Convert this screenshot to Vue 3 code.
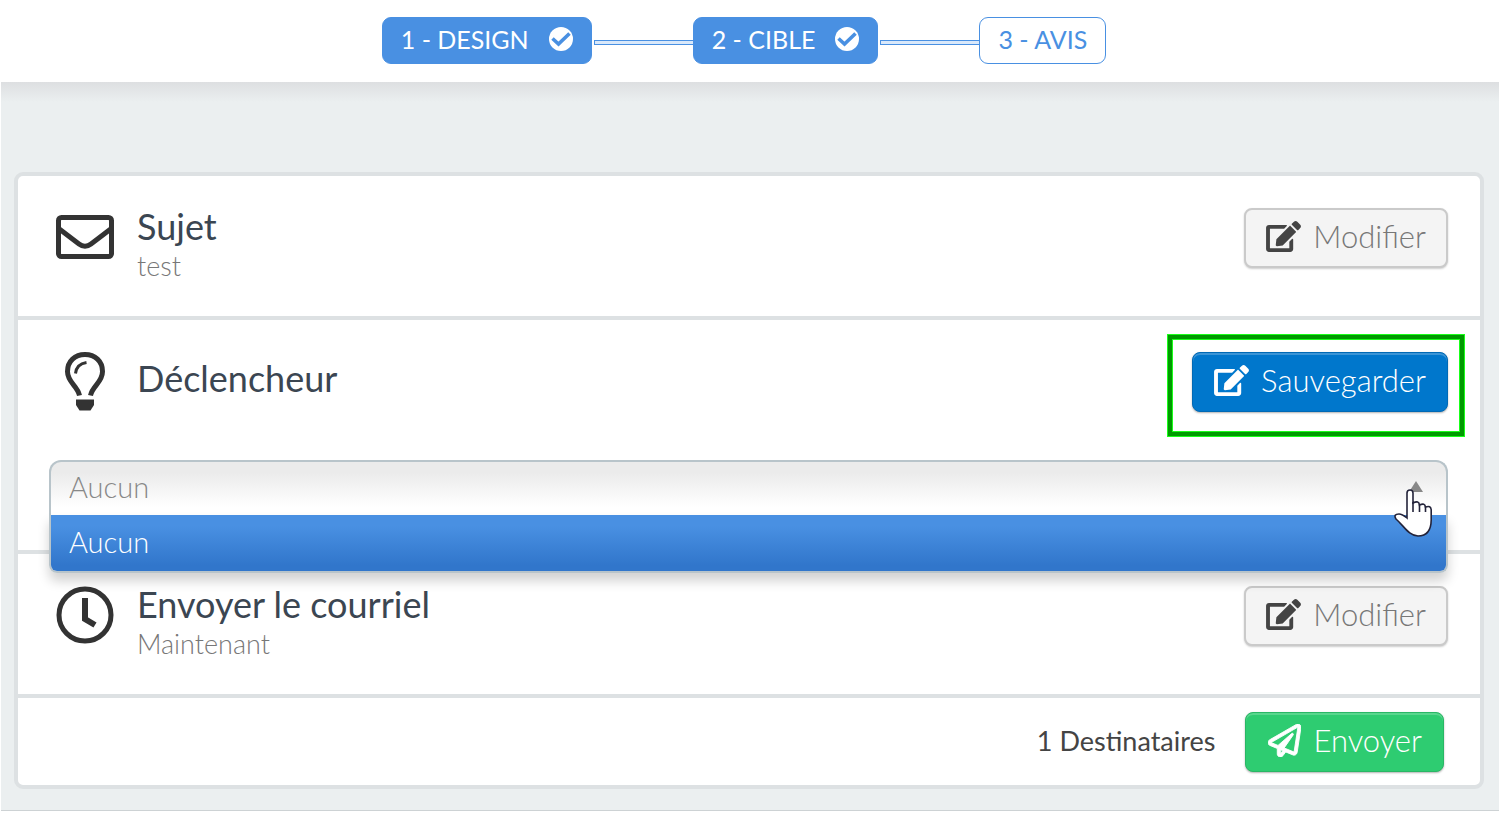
<script setup>
import { ref } from 'vue'

const steps = [
  { label: '1 - DESIGN', done: true },
  { label: '2 - CIBLE', done: true },
  { label: '3 - AVIS', done: false },
]
const trigger = ref('Aucun')
const options = ['Aucun']

const editPath = 'M402.6 83.2l90.2 90.2c3.8 3.8 3.8 10 0 13.8L274.4 405.6l-92.8 10.3c-12.4 1.4-22.9-9.1-21.5-21.5l10.3-92.8L388.8 83.2c3.8-3.8 10-3.8 13.8 0zm162-22.9l-48.8-48.8c-15.2-15.2-39.9-15.2-55.2 0l-35.4 35.4c-3.8 3.8-3.8 10 0 13.8l90.2 90.2c3.8 3.8 10 3.8 13.8 0l35.4-35.4c15.2-15.3 15.2-40 0-55.2zM384 346.2V448H64V128h229.8c3.2 0 6.2-1.3 8.5-3.5l40-40c7.6-7.6 2.2-20.5-8.5-20.5H48C21.5 64 0 85.5 0 112v352c0 26.5 21.5 48 48 48h352c26.5 0 48-21.5 48-48V306.2c0-10.7-12.9-16-20.5-8.5l-40 40c-2.2 2.3-3.5 5.3-3.5 8.5z'
</script>

<template>
  <div class="page">
    <header class="steps">
      <template v-for="(step, i) in steps" :key="step.label">
        <span v-if="i" class="link"></span>
        <button type="button" class="step" :class="{ done: step.done }">
          {{ step.label }}
          <svg v-if="step.done" class="check" viewBox="0 0 24 24" aria-hidden="true">
            <circle cx="12" cy="12" r="12" fill="#fff" />
            <path d="M3.500 11.500L9.500 17L20.500 6.500" fill="none" stroke="#4990e2" stroke-width="3.600" />
          </svg>
        </button>
      </template>
    </header>

    <main class="body">
      <div class="card">
        <section class="row">
          <svg class="icon" viewBox="0 0 60 60" aria-hidden="true">
            <g fill="none" stroke="#333" stroke-width="5">
              <rect x="3.5" y="9.5" width="53" height="39" rx="3" />
              <path d="M3 20L24 36Q30 40.500 36 36L57 20" />
            </g>
          </svg>
          <div class="text">
            <h2>Sujet</h2>
            <p>test</p>
          </div>
          <button type="button" class="btn">
            <svg class="edit" viewBox="0 0 576 512" aria-hidden="true"><path :d="editPath" /></svg>
            Modifier
          </button>
        </section>

        <section class="row trigger">
          <svg class="icon" viewBox="0 0 60 60" aria-hidden="true">
            <path d="M24.500 43.500C22.500 33.500 12.500 30.500 12.500 19.500C12.500 9 20 2.500 30 2.500S47.500 9 47.500 19.500C47.500 30.500 37.500 33.500 35.500 43.500" fill="none" stroke="#333" stroke-width="5" />
            <path d="M20.500 21.500Q21.500 12 31.500 10.500" fill="none" stroke="#333" stroke-width="3" />
            <path d="M21 47.500H39V53L35.500 58.500H24.500L21 53Z" fill="#333" />
          </svg>
          <div class="text">
            <h2 id="trigger-label">Déclencheur</h2>
          </div>
          <div class="highlight">
            <button type="button" class="btn primary">
              <svg class="edit" viewBox="0 0 576 512" aria-hidden="true"><path :d="editPath" /></svg>
              Sauvegarder
            </button>
          </div>
          <div class="dropdown">
            <select v-model="trigger" aria-labelledby="trigger-label">
              <option v-for="o in options" :key="o">{{ o }}</option>
            </select>
            <span class="caret"></span>
            <ul class="menu">
              <li v-for="o in options" :key="o">{{ o }}</li>
            </ul>
            <svg class="pointer" viewBox="0 0 38 48" aria-hidden="true">
              <path d="M13 28V4Q13 1 16 1T19 4V14Q25 11 25.500 16Q31 13.500 31.500 18Q37 16 37.200 21V31Q37 47 24 47C15 47 10 37 2 30Q-1 25 5 25Q8 25 13 29Z" fill="#fff" stroke="#23233a" stroke-width="1.600" />
              <path d="M19 13V23M25.500 15V23M31.500 17V23" stroke="#23233a" stroke-width="1.600" />
            </svg>
          </div>
        </section>

        <section class="row">
          <svg class="icon" viewBox="0 0 60 60" aria-hidden="true">
            <circle cx="30" cy="29" r="26" fill="none" stroke="#333" stroke-width="5" />
            <path d="M30 12V33L40 39" fill="none" stroke="#333" stroke-width="6" />
          </svg>
          <div class="text">
            <h2>Envoyer le courriel</h2>
            <p>Maintenant</p>
          </div>
          <button type="button" class="btn">
            <svg class="edit" viewBox="0 0 576 512" aria-hidden="true"><path :d="editPath" /></svg>
            Modifier
          </button>
        </section>

        <footer class="send">
          <span>1 Destinataires</span>
          <button type="button" class="btn success">
            <svg class="plane" viewBox="0 0 512 512" aria-hidden="true">
              <path d="M440 6.500L24 246.400c-34.400 19.900-31.100 70.800 5.700 85.900L144 379.600V464c0 46.400 59.200 65.500 86.600 28.600l43.800-59.100 111.900 46.200c5.900 2.400 12.100 3.600 18.300 3.600 8.200 0 16.300-2.100 23.600-6.200 12.800-7.200 21.600-20 23.900-34.500l59.400-387.200c6.100-40.100-36.900-68.800-71.500-48.900zM192 464v-64.600l36.600 15.100L192 464zm212.600-28.700l-153.800-63.500L391 169.500c10.700-15.500-9.500-33.500-23.700-21.200L155.800 332.600 48 288 464 48l-59.400 387.300z" />
            </svg>
            Envoyer
          </button>
        </footer>
      </div>
    </main>
  </div>
</template>

<style>
body {
  margin: 0;
  background: #fff;
}
</style>

<style scoped>
.page {
  min-height: 100vh;
  box-sizing: border-box;
  padding-left: 1px;
  font-family: Lato, "Liberation Sans", sans-serif;
  font-weight: 300;
  color: #777;
}
.page * {
  box-sizing: border-box;
}
.steps {
  display: flex;
  justify-content: center;
  padding: 17px 12px 18px 0;
}
.step {
  display: flex;
  align-items: center;
  gap: 20px;
  height: 47px;
  padding: 0 18px 4px;
  border: 1px solid #4990e2;
  border-radius: 9px;
  background: #fff;
  color: #4990e2;
  font: 400 25px/32px Lato, sans-serif;
}
.step.done {
  background: #4990e2;
  color: #fff;
}
.check {
  width: 24px;
  height: 24px;
}
.link {
  width: 99px;
  height: 5px;
  margin: 23px 0 0 2px;
  border: 1px solid #4990e2;
  border-right: 0;
  background: #d9e8fa;
}
.body {
  padding: 90px 15px 21px 13px;
  border-bottom: 1px solid #cdd2d4;
  background: linear-gradient(#dddfe1, #ebeff0 20px);
}
.card {
  border: 4px solid #dde1e3;
  border-radius: 9px;
  background: #fff;
}
.row {
  display: flex;
  flex-wrap: wrap;
  align-items: flex-start;
  min-height: 144px;
  padding: 32px 32px 0 37px;
  border-bottom: 4px solid #dde1e3;
}
.icon {
  width: 60px;
  height: 60px;
  margin-right: 22px;
}
.text {
  flex: 1;
}
h2 {
  margin: 0;
  color: #3b4652;
  font-size: 36px;
  font-weight: 400;
  line-height: 36px;
}
p {
  margin: 4px 0 0;
  font-size: 27px;
  line-height: 36px;
}
.btn {
  display: flex;
  align-items: center;
  gap: 12px;
  height: 60px;
  padding: 0 20px 4px;
  border: 2px solid #cacaca;
  border-radius: 8px;
  background: #f4f4f4;
  box-shadow: 0 1px 2px rgba(0, 0, 0, 0.2);
  color: #777;
  font: 300 31px/40px Lato, sans-serif;
}
.edit {
  width: 35px;
  height: 31px;
  fill: #444;
}
.btn.primary {
  padding: 0 21px 4px;
  border: 1px solid #0069b5;
  background: #0077cc;
  box-shadow: inset 0 2px 0 #3a94d6, 0 1px 2px rgba(0, 0, 0, 0.3);
  color: #fff;
}
.btn.primary .edit {
  fill: #fff;
}
.highlight {
  position: relative;
}
.highlight::after {
  content: "";
  position: absolute;
  inset: -17px -16px -24px -24px;
  border: 4px solid #009a00;
  outline: 1px solid #1aff1a;
  box-shadow: inset 0 0 0 1px #1aff1a;
  pointer-events: none;
}
.trigger {
  min-height: 234px;
}
.trigger .text {
  padding-top: 8px;
}
.dropdown {
  position: relative;
  flex: 0 0 calc(100% + 6px);
  margin: 48px 0 35px -6px;
}
select {
  display: block;
  width: 100%;
  height: 55px;
  padding: 0 18px 4px;
  border: 2px solid #b8c4ca;
  border-bottom: 0;
  border-radius: 12px 12px 0 0;
  background: linear-gradient(#ebebeb 20%, #fff 85%);
  appearance: none;
  color: #888;
  font: 300 29px/40px Lato, sans-serif;
}
.menu {
  position: absolute;
  top: 55px;
  left: 0;
  right: 0;
  z-index: 1;
  margin: 0;
  padding: 0;
  border: 2px solid #b8c4ca;
  border-top: 0;
  border-radius: 0 0 8px 8px;
  box-shadow: 0 8px 12px rgba(0, 0, 0, 0.18);
  list-style: none;
}
.menu li {
  padding: 7px 18px 9px;
  border-radius: 0 0 6px 6px;
  background: linear-gradient(#4990e2 20%, #3176cb 90%);
  color: #fff;
  font-size: 29px;
  line-height: 40px;
}
.caret {
  position: absolute;
  top: 21px;
  right: 25px;
  border: 7px solid transparent;
  border-top: 0;
  border-bottom: 11px solid #888;
}
.pointer {
  position: absolute;
  top: 29px;
  right: 16px;
  z-index: 2;
  width: 38px;
  height: 48px;
}
.send {
  display: flex;
  align-items: center;
  justify-content: flex-end;
  gap: 30px;
  padding: 14px 36px 13px 37px;
  color: #444;
  font-size: 27px;
  font-weight: 400;
}
.send span {
  padding-bottom: 4px;
}
.btn.success {
  padding: 0 21px 4px 22px;
  border: 1px solid #29b765;
  background: #2ecc71;
  box-shadow: inset 0 2px 0 #58d68d, 0 1px 2px rgba(0, 0, 0, 0.3);
  color: #fff;
}
.plane {
  width: 33px;
  height: 33px;
  fill: #fff;
  stroke: #fff;
  stroke-width: 14px;
}
</style>
